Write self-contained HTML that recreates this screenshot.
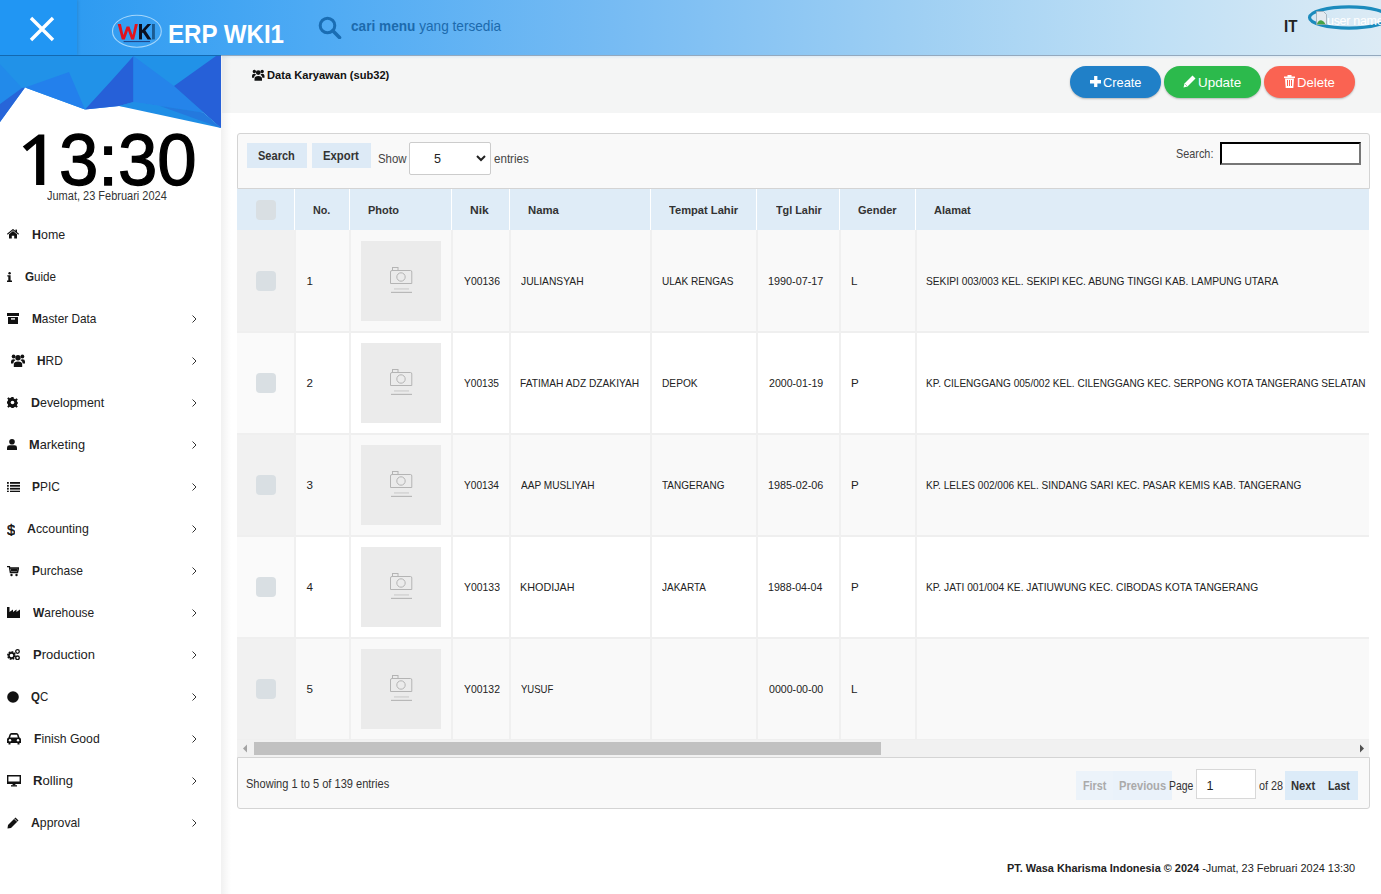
<!DOCTYPE html><html><head><meta charset="utf-8"><style>
*{box-sizing:border-box;margin:0;padding:0}
html,body{width:1381px;height:894px;overflow:hidden;background:#fff;font-family:"Liberation Sans",sans-serif;color:#222}
.a{position:absolute;white-space:nowrap}
.mi{position:absolute;left:0;width:221px;height:20px}
.mi svg{position:absolute}
.btn{position:absolute;top:66px;height:32px;border-radius:16px;box-shadow:0 1px 2px rgba(0,0,0,.25)}
.th{position:absolute;top:189px;height:41px;background:#dfecf7}
.photo{position:absolute;width:80px;height:80px;background:#ebebeb}
.cb{position:absolute;width:20px;height:20px;border-radius:4px;background:#d9dfe3}
</style></head><body>
<div class="a" style="left:0;top:0;width:1381px;height:55px;background:linear-gradient(90deg,#2e9bf1 78px,#4daaf4 310px,#76bbf3 610px,#9ecff3 910px,#bedff5 1150px,#dcebf5 1381px)"></div>
<div class="a" style="left:0;top:0;width:77px;height:55px;background:#2196f3;box-shadow:1px 0 3px rgba(0,0,0,.12)"></div>
<svg class="a" style="left:29px;top:16px" width="26" height="26" viewBox="0 0 26 26"><path d="M2 2L24 24M24 2L2 24" stroke="#fff" stroke-width="3.4"/></svg>
<svg class="a" style="left:105px;top:10px" width="65" height="42" viewBox="105 10 65 42">
<ellipse cx="136.9" cy="31.2" rx="24.4" ry="16" fill="none" stroke="#a4d6fb" stroke-width="1.1"/>
<polygon points="117.7,24 120.9,24 123.4,35 126.6,26.5 129.4,26.5 132.6,35 134.9,24 137.9,24 134.1,39.4 131.2,39.4 128,30.5 124.8,39.4 121.8,39.4" fill="#e3121c"/>
<rect x="139" y="24" width="3" height="15.4" fill="#0b1020"/>
<polygon points="141.5,30.8 147.6,24 151.2,24 145.4,30.4 151.4,39.4 147.6,39.4 142.9,32.4 141.5,33.8" fill="#0b1020"/>
<rect x="152" y="24" width="2.9" height="15.4" fill="#1b5b92"/>
<rect x="123.6" y="41" width="26.4" height="1.1" fill="#1a2a6a" opacity=".75"/>
</svg>
<div id="t_erp" class="a" style="left:167.50px;top:20.90px;font-size:26.00px;line-height:26.00px;color:#fff;font-weight:bold;transform:scaleX(0.9263);transform-origin:0 0;">ERP WKI1</div>
<svg class="a" style="left:318px;top:16px" width="24" height="23" viewBox="0 0 24 23"><circle cx="9.5" cy="9.5" r="7.3" fill="none" stroke="#1a6db3" stroke-width="3"/><path d="M14.8 14.8L21.5 21.5" stroke="#1a6db3" stroke-width="3.6" stroke-linecap="round"/></svg>
<div id="t_cari" class="a" style="left:351.00px;top:18.25px;font-size:15.00px;line-height:15.00px;color:#1c6aad;transform:scaleX(0.9086);transform-origin:0 0;"><b>cari menu</b> yang tersedia</div>
<div id="t_it" class="a" style="left:1284.10px;top:18.21px;font-size:17.40px;line-height:17.40px;color:#222;font-weight:bold;transform:scaleX(0.8667);transform-origin:0 0;">IT</div>
<svg class="a" style="left:1306px;top:3px" width="75" height="30" viewBox="0 0 75 30">
<ellipse cx="43" cy="14.5" rx="39.5" ry="10.6" fill="none" stroke="#1b8bbd" stroke-width="3.2"/>
<path d="M10.5 8.5H17.5L20.5 11.5V21.5H10.5Z" fill="#e4eaf0" stroke="#9aa8b4" stroke-width="0.8"/>
<path d="M10.8 21.3Q12.5 16.5 16 17.5Q18 18.2 19.5 21.3Z" fill="#46a346"/>
<text x="21" y="21.5" font-family="Liberation Sans" font-size="12.5" fill="#ffffff" letter-spacing="-0.3">user name</text>
</svg>
<svg class="a" style="left:0;top:55px" width="221" height="74" viewBox="0 55 221 74">
<polygon points="0,55 221,55 221,128 203,112.5 119,106 85,109.6 25,87.5 0,122" fill="#2192e8"/>
<polygon points="0,64 22,88 0,104" fill="#228aea"/>
<polygon points="0,104 22,88 25,87.5 0,122" fill="#2765d9"/>
<polygon points="25,87.5 69,72 85,109.6" fill="#2380ec"/>
<polygon points="85,109.6 112,80 133.5,56 133.5,102 119,106" fill="#2660d8"/>
<polygon points="133.5,56 174,86 203,112.5 133.5,102" fill="#2584ea"/>
<polygon points="216,56 221,56 221,128 174,86" fill="#2660d8"/>
<polygon points="119,106 133.5,102 203,112.5 221,128" fill="#1f8ee6"/>
<polygon points="160,106 203,112.5 221,128" fill="#2479de"/>
</svg>
<svg class="a" style="left:0;top:120px" width="60" height="70" viewBox="0 120 60 70"><polygon points="38.6,134.6 44.3,134.6 44.3,185.1 36.1,185.1 36.1,143.4 27,151.2 22.8,146.6" fill="#000"/></svg>
<div id="t_clock" class="a" style="left:58.70px;top:123.97px;font-size:72.50px;line-height:72.50px;color:#000;transform:scaleX(0.9758);transform-origin:0 0;-webkit-text-stroke:1.3px #000;">3:30</div>
<div id="t_date" class="a" style="left:47.00px;top:189.80px;font-size:12.00px;line-height:12.00px;color:#333;transform:scaleX(0.9160);transform-origin:0 0;">Jumat, 23 Februari 2024</div>
<div class="mi" style="top:225px"><svg style="left:7px;top:4px" width="12" height="10" viewBox="0 0 12 10"><path d="M0.3 5.2L6 0.6L11.7 5.2" fill="none" stroke="#111" stroke-width="1.1"/><rect x="8.4" y="0.6" width="1.6" height="2.6" fill="#111"/><path d="M2 5.2L6 2L10 5.2V9.6H7.2V6.8H4.8V9.6H2Z" fill="#111"/></svg></div>
<div id="t_m0" class="a" style="left:31.60px;top:229.16px;font-size:12.75px;line-height:12.75px;color:#222;transform:scaleX(0.9735);transform-origin:0 0;"><b>H</b>ome</div>
<div class="mi" style="top:267px"><svg style="left:7px;top:5px" width="5" height="10" viewBox="0 0 5 10"><circle cx="2.6" cy="1.2" r="1.2" fill="#111"/><path d="M0.3 3.2H3.6V8.5H5V10H0V8.5H1.3V4.6H0.3Z" fill="#111"/></svg></div>
<div id="t_m1" class="a" style="left:24.90px;top:271.16px;font-size:12.75px;line-height:12.75px;color:#222;transform:scaleX(0.9131);transform-origin:0 0;"><b>G</b>uide</div>
<div class="mi" style="top:309px"><svg style="left:7px;top:4px" width="12" height="11" viewBox="0 0 12 11"><rect x="0" y="0" width="12" height="3" fill="#111"/><rect x="1" y="4" width="10" height="7" fill="#111"/><rect x="4" y="5.2" width="4" height="1.4" fill="#fff"/></svg><svg style="left:191px;top:5px" width="7" height="10" viewBox="0 0 7 10"><path d="M1.5 1.5L5 5L1.5 8.5" fill="none" stroke="#333" stroke-width="1"/></svg></div>
<div id="t_m2" class="a" style="left:31.80px;top:313.16px;font-size:12.75px;line-height:12.75px;color:#222;transform:scaleX(0.9276);transform-origin:0 0;"><b>M</b>aster Data</div>
<div class="mi" style="top:351px"><svg style="left:11px;top:3px" width="14" height="13" viewBox="0 0 14 13"><circle cx="7" cy="3.8" r="2.7" fill="#111"/><circle cx="2.6" cy="2.5" r="1.9" fill="#111"/><circle cx="11.4" cy="2.5" r="1.9" fill="#111"/><path d="M2.8 13V10.8Q2.8 7.6 7 7.6Q11.2 7.6 11.2 10.8V13Z" fill="#111"/><path d="M0 9.6V7.4Q0 5.2 2.5 5.2Q3.9 5.2 4.5 6.1Q2.3 7.3 2.3 9.6Z" fill="#111"/><path d="M14 9.6V7.4Q14 5.2 11.5 5.2Q10.1 5.2 9.5 6.1Q11.7 7.3 11.7 9.6Z" fill="#111"/></svg><svg style="left:191px;top:5px" width="7" height="10" viewBox="0 0 7 10"><path d="M1.5 1.5L5 5L1.5 8.5" fill="none" stroke="#333" stroke-width="1"/></svg></div>
<div id="t_m3" class="a" style="left:36.60px;top:355.16px;font-size:12.75px;line-height:12.75px;color:#222;transform:scaleX(0.9313);transform-origin:0 0;"><b>H</b>RD</div>
<div class="mi" style="top:393px"><svg style="left:7px;top:4px" width="11" height="11" viewBox="0 0 11 11"><path d="M4.5 0H6.5L6.8 1.6L8.2 2.2L9.5 1.2L10.8 2.5L9.8 3.8L10.4 5.2L11 5.5V6.5L10.4 6.8L9.8 8.2L10.8 9.5L9.5 10.8L8.2 9.8L6.8 10.4L6.5 11H4.5L4.2 10.4L2.8 9.8L1.5 10.8L0.2 9.5L1.2 8.2L0.6 6.8L0 6.5V4.5L0.6 4.2L1.2 2.8L0.2 1.5L1.5 0.2L2.8 1.2L4.2 0.6Z" fill="#111"/><circle cx="5.5" cy="5.5" r="1.8" fill="#fff"/></svg><svg style="left:191px;top:5px" width="7" height="10" viewBox="0 0 7 10"><path d="M1.5 1.5L5 5L1.5 8.5" fill="none" stroke="#333" stroke-width="1"/></svg></div>
<div id="t_m4" class="a" style="left:30.50px;top:397.16px;font-size:12.75px;line-height:12.75px;color:#222;transform:scaleX(0.9734);transform-origin:0 0;"><b>D</b>evelopment</div>
<div class="mi" style="top:435px"><svg style="left:7px;top:4px" width="10" height="11" viewBox="0 0 10 11"><circle cx="5" cy="2.8" r="2.8" fill="#111"/><path d="M0 11V8.5Q0 6.2 2.5 6.2H7.5Q10 6.2 10 8.5V11Z" fill="#111"/></svg><svg style="left:191px;top:5px" width="7" height="10" viewBox="0 0 7 10"><path d="M1.5 1.5L5 5L1.5 8.5" fill="none" stroke="#333" stroke-width="1"/></svg></div>
<div id="t_m5" class="a" style="left:29.10px;top:439.16px;font-size:12.75px;line-height:12.75px;color:#222;transform:scaleX(1.0012);transform-origin:0 0;"><b>M</b>arketing</div>
<div class="mi" style="top:477px"><svg style="left:7px;top:4.5px" width="13" height="10.5" viewBox="0 0 13 10.5"><g fill="#111"><rect x="0" y="0" width="1.8" height="1.8"/><rect x="3" y="0" width="10" height="1.8"/><rect x="0" y="2.9" width="1.8" height="1.8"/><rect x="3" y="2.9" width="10" height="1.8"/><rect x="0" y="5.8" width="1.8" height="1.8"/><rect x="3" y="5.8" width="10" height="1.8"/><rect x="0" y="8.7" width="1.8" height="1.8"/><rect x="3" y="8.7" width="10" height="1.8"/></g></svg><svg style="left:191px;top:5px" width="7" height="10" viewBox="0 0 7 10"><path d="M1.5 1.5L5 5L1.5 8.5" fill="none" stroke="#333" stroke-width="1"/></svg></div>
<div id="t_m6" class="a" style="left:32.10px;top:481.16px;font-size:12.75px;line-height:12.75px;color:#222;transform:scaleX(0.9331);transform-origin:0 0;"><b>P</b>PIC</div>
<div class="mi" style="top:519px"><svg style="left:7px;top:3px" width="8" height="14" viewBox="0 0 8 14"><text x="0" y="12.5" font-family="Liberation Sans" font-size="15" fill="#111" stroke="#111" stroke-width="0.4">$</text></svg><svg style="left:191px;top:5px" width="7" height="10" viewBox="0 0 7 10"><path d="M1.5 1.5L5 5L1.5 8.5" fill="none" stroke="#333" stroke-width="1"/></svg></div>
<div id="t_m7" class="a" style="left:27.00px;top:523.16px;font-size:12.75px;line-height:12.75px;color:#222;transform:scaleX(0.9683);transform-origin:0 0;"><b>A</b>ccounting</div>
<div class="mi" style="top:561px"><svg style="left:7px;top:5px" width="12" height="11" viewBox="0 0 12 11"><path d="M0 0.5H2.4L3.4 6.5H10.5L11.5 2H3" fill="none" stroke="#111" stroke-width="1.4"/><rect x="4" y="2.5" width="6.5" height="3" fill="#111"/><circle cx="4.5" cy="9" r="1.2" fill="#111"/><circle cx="9.5" cy="9" r="1.2" fill="#111"/></svg><svg style="left:191px;top:5px" width="7" height="10" viewBox="0 0 7 10"><path d="M1.5 1.5L5 5L1.5 8.5" fill="none" stroke="#333" stroke-width="1"/></svg></div>
<div id="t_m8" class="a" style="left:31.60px;top:565.16px;font-size:12.75px;line-height:12.75px;color:#222;transform:scaleX(0.9446);transform-origin:0 0;"><b>P</b>urchase</div>
<div class="mi" style="top:603px"><svg style="left:7px;top:4px" width="13" height="11" viewBox="0 0 13 11"><path d="M0 0H2.5V5L6 2.5V5L9.5 2.5V5L13 2.5V11H0Z" fill="#111"/></svg><svg style="left:191px;top:5px" width="7" height="10" viewBox="0 0 7 10"><path d="M1.5 1.5L5 5L1.5 8.5" fill="none" stroke="#333" stroke-width="1"/></svg></div>
<div id="t_m9" class="a" style="left:32.50px;top:607.16px;font-size:12.75px;line-height:12.75px;color:#222;transform:scaleX(0.9378);transform-origin:0 0;"><b>W</b>arehouse</div>
<div class="mi" style="top:645px"><svg style="left:7px;top:4px" width="13" height="11" viewBox="0 0 13 11"><circle cx="4.5" cy="6.5" r="3.4" fill="none" stroke="#111" stroke-width="2.2" stroke-dasharray="1.6 1"/><circle cx="4.5" cy="6.5" r="2.6" fill="none" stroke="#111" stroke-width="1.6"/><circle cx="10.5" cy="2.5" r="1.8" fill="none" stroke="#111" stroke-width="1.3"/><circle cx="10.5" cy="8.8" r="1.8" fill="none" stroke="#111" stroke-width="1.3"/></svg><svg style="left:191px;top:5px" width="7" height="10" viewBox="0 0 7 10"><path d="M1.5 1.5L5 5L1.5 8.5" fill="none" stroke="#333" stroke-width="1"/></svg></div>
<div id="t_m10" class="a" style="left:33.10px;top:649.16px;font-size:12.75px;line-height:12.75px;color:#222;transform:scaleX(1.0169);transform-origin:0 0;"><b>P</b>roduction</div>
<div class="mi" style="top:687px"><svg style="left:7px;top:4px" width="12" height="12" viewBox="0 0 12 12"><circle cx="6" cy="6" r="5.8" fill="#111"/></svg><svg style="left:191px;top:5px" width="7" height="10" viewBox="0 0 7 10"><path d="M1.5 1.5L5 5L1.5 8.5" fill="none" stroke="#333" stroke-width="1"/></svg></div>
<div id="t_m11" class="a" style="left:30.60px;top:691.16px;font-size:12.75px;line-height:12.75px;color:#222;transform:scaleX(0.9006);transform-origin:0 0;"><b>Q</b>C</div>
<div class="mi" style="top:729px"><svg style="left:7px;top:4px" width="14" height="12" viewBox="0 0 14 12"><path d="M2.5 1.5Q3 0 4.5 0H9.5Q11 0 11.5 1.5L12.5 4.5Q14 5 14 6.5V10H12.5V11.5H10.5V10H3.5V11.5H1.5V10H0V6.5Q0 5 1.5 4.5Z" fill="#111"/><path d="M3.2 4.5L4 1.8H10L10.8 4.5Z" fill="#fff"/><circle cx="3" cy="7.2" r="1.2" fill="#fff"/><circle cx="11" cy="7.2" r="1.2" fill="#fff"/></svg><svg style="left:191px;top:5px" width="7" height="10" viewBox="0 0 7 10"><path d="M1.5 1.5L5 5L1.5 8.5" fill="none" stroke="#333" stroke-width="1"/></svg></div>
<div id="t_m12" class="a" style="left:34.10px;top:733.16px;font-size:12.75px;line-height:12.75px;color:#222;transform:scaleX(0.9552);transform-origin:0 0;"><b>F</b>inish Good</div>
<div class="mi" style="top:771px"><svg style="left:7px;top:4px" width="14" height="11.5" viewBox="0 0 14 11.5"><path d="M0 0H14V9H0ZM1.4 1.4V6.6H12.6V1.4Z" fill="#111" fill-rule="evenodd"/><rect x="5.6" y="9" width="2.8" height="1.4" fill="#111"/><rect x="4" y="10.2" width="6" height="1.3" fill="#111"/></svg><svg style="left:191px;top:5px" width="7" height="10" viewBox="0 0 7 10"><path d="M1.5 1.5L5 5L1.5 8.5" fill="none" stroke="#333" stroke-width="1"/></svg></div>
<div id="t_m13" class="a" style="left:33.10px;top:775.16px;font-size:12.75px;line-height:12.75px;color:#222;transform:scaleX(1.0270);transform-origin:0 0;"><b>R</b>olling</div>
<div class="mi" style="top:813px"><svg style="left:7px;top:4px" width="12" height="12" viewBox="0 0 12 12"><path d="M8.5 0.5L11.5 3.5L4 11L0.5 11.5L1 8Z" fill="#111"/><path d="M7.3 1.7L10.3 4.7" stroke="#fff" stroke-width="0.8"/></svg><svg style="left:191px;top:5px" width="7" height="10" viewBox="0 0 7 10"><path d="M1.5 1.5L5 5L1.5 8.5" fill="none" stroke="#333" stroke-width="1"/></svg></div>
<div id="t_m14" class="a" style="left:30.60px;top:817.16px;font-size:12.75px;line-height:12.75px;color:#222;transform:scaleX(0.9614);transform-origin:0 0;"><b>A</b>pproval</div>
<div class="a" style="left:222px;top:56px;width:1159px;height:57px;background:#f4f5f5"></div>
<svg class="a" style="left:252px;top:68.5px" width="12.5" height="12" viewBox="0 0 14 13"><circle cx="7" cy="3.8" r="2.7" fill="#111"/><circle cx="2.6" cy="2.5" r="1.9" fill="#111"/><circle cx="11.4" cy="2.5" r="1.9" fill="#111"/><path d="M2.8 13V10.8Q2.8 7.6 7 7.6Q11.2 7.6 11.2 10.8V13Z" fill="#111"/><path d="M0 9.6V7.4Q0 5.2 2.5 5.2Q3.9 5.2 4.5 6.1Q2.3 7.3 2.3 9.6Z" fill="#111"/><path d="M14 9.6V7.4Q14 5.2 11.5 5.2Q10.1 5.2 9.5 6.1Q11.7 7.3 11.7 9.6Z" fill="#111"/></svg>
<div id="t_title" class="a" style="left:267.10px;top:70.19px;font-size:11.30px;line-height:11.30px;color:#111;font-weight:bold;transform:scaleX(0.9840);transform-origin:0 0;">Data Karyawan (sub32)</div>
<div class="btn" style="left:1070px;width:91px;background:#2080c8"></div>
<div class="btn" style="left:1164px;width:97px;background:#2cba4c"></div>
<div class="btn" style="left:1264px;width:91px;background:#fa6352"></div>
<svg class="a" style="left:1089.5px;top:75.7px" width="11.5" height="11.5" viewBox="0 0 12 12"><path d="M4.3 0H7.7V4.3H12V7.7H7.7V12H4.3V7.7H0V4.3H4.3Z" fill="#fff"/></svg>
<svg class="a" style="left:1183px;top:75px" width="13" height="13" viewBox="0 0 13 13"><path d="M9.5 0.5L12.5 3.5L4.5 11.5L0.5 12.5L1.5 8.5Z" fill="#fff"/><path d="M2.5 9.5L3.5 10.5" stroke="#2cba4c" stroke-width="1"/></svg>
<svg class="a" style="left:1284px;top:75px" width="11" height="13" viewBox="0 0 11 13"><rect x="0" y="1.5" width="11" height="1.6" fill="#fff"/><rect x="3.5" y="0" width="4" height="2" fill="#fff"/><path d="M1 3.5H10L9.3 13H1.7Z" fill="#fff"/><rect x="3" y="5" width="1" height="6" fill="#fa6352"/><rect x="5" y="5" width="1" height="6" fill="#fa6352"/><rect x="7" y="5" width="1" height="6" fill="#fa6352"/></svg>
<div id="t_create" class="a" style="left:1103.00px;top:75.81px;font-size:13.40px;line-height:13.40px;color:#fff;transform:scaleX(0.9565);transform-origin:0 0;">Create</div>
<div id="t_update" class="a" style="left:1198.30px;top:75.81px;font-size:13.40px;line-height:13.40px;color:#fff;transform:scaleX(1.0022);transform-origin:0 0;">Update</div>
<div id="t_delete" class="a" style="left:1297.00px;top:75.81px;font-size:13.40px;line-height:13.40px;color:#fff;transform:scaleX(0.9781);transform-origin:0 0;">Delete</div>
<div class="a" style="left:237px;top:133px;width:1133px;height:56px;border:1px solid #d4d4d4;border-radius:3px 3px 0 0;background:#f9f9f9"></div>
<div class="a" style="left:237px;top:757px;width:1133px;height:52px;border:1px solid #d4d4d4;border-radius:0 0 3px 3px;background:#f9f9f9"></div>
<div class="a" style="left:247px;top:143px;width:60px;height:25px;background:#ddeaf6"></div>
<div class="a" style="left:312px;top:143px;width:59px;height:25px;background:#ddeaf6"></div>
<div id="t_bsearch" class="a" style="left:258.10px;top:150.49px;font-size:12.60px;line-height:12.60px;color:#333;font-weight:bold;transform:scaleX(0.8773);transform-origin:0 0;">Search</div>
<div id="t_bexport" class="a" style="left:323.10px;top:150.49px;font-size:12.60px;line-height:12.60px;color:#333;font-weight:bold;transform:scaleX(0.8992);transform-origin:0 0;">Export</div>
<div id="t_show" class="a" style="left:378.10px;top:152.69px;font-size:12.60px;line-height:12.60px;color:#444;transform:scaleX(0.9058);transform-origin:0 0;">Show</div>
<div class="a" style="left:409px;top:142px;width:82px;height:33px;background:#fff;border:1px solid #ccc;border-radius:2px"></div>
<div id="t_sel5" class="a" style="left:434.00px;top:152.69px;font-size:12.60px;line-height:12.60px;color:#222;">5</div>
<svg class="a" style="left:476px;top:155px" width="10" height="7" viewBox="0 0 10 7"><path d="M1 1L5 5L9 1" fill="none" stroke="#222" stroke-width="2"/></svg>
<div id="t_entries" class="a" style="left:493.70px;top:152.69px;font-size:12.60px;line-height:12.60px;color:#444;transform:scaleX(0.9209);transform-origin:0 0;">entries</div>
<div id="t_searchlbl" class="a" style="left:1176.10px;top:148.39px;font-size:12.60px;line-height:12.60px;color:#444;transform:scaleX(0.8618);transform-origin:0 0;">Search:</div>
<div class="a" style="left:1220px;top:142px;width:141px;height:23px;background:#fff;border:2px inset #767676;border-top-color:#222;border-left-color:#222"></div>
<div class="th" style="left:237px;width:57px"></div>
<div class="th" style="left:295px;width:54px"></div>
<div class="th" style="left:350px;width:101px"></div>
<div class="th" style="left:452px;width:57px"></div>
<div class="th" style="left:510px;width:140px"></div>
<div class="th" style="left:651px;width:105px"></div>
<div class="th" style="left:757px;width:82px"></div>
<div class="th" style="left:840px;width:75px"></div>
<div class="th" style="left:916px;width:453px"></div>
<div id="t_h1" class="a" style="left:313.00px;top:205.40px;font-size:11.30px;line-height:11.30px;color:#333;font-weight:bold;transform:scaleX(0.9538);transform-origin:0 0;">No.</div>
<div id="t_h2" class="a" style="left:368.00px;top:205.40px;font-size:11.30px;line-height:11.30px;color:#333;font-weight:bold;transform:scaleX(0.9711);transform-origin:0 0;">Photo</div>
<div id="t_h3" class="a" style="left:469.70px;top:205.40px;font-size:11.30px;line-height:11.30px;color:#333;font-weight:bold;transform:scaleX(1.0713);transform-origin:0 0;">Nik</div>
<div id="t_h4" class="a" style="left:527.60px;top:205.40px;font-size:11.30px;line-height:11.30px;color:#333;font-weight:bold;transform:scaleX(1.0025);transform-origin:0 0;">Nama</div>
<div id="t_h5" class="a" style="left:669.40px;top:205.40px;font-size:11.30px;line-height:11.30px;color:#333;font-weight:bold;transform:scaleX(0.9857);transform-origin:0 0;">Tempat Lahir</div>
<div id="t_h6" class="a" style="left:775.50px;top:205.40px;font-size:11.30px;line-height:11.30px;color:#333;font-weight:bold;transform:scaleX(0.9590);transform-origin:0 0;">Tgl Lahir</div>
<div id="t_h7" class="a" style="left:858.00px;top:205.40px;font-size:11.30px;line-height:11.30px;color:#333;font-weight:bold;transform:scaleX(0.9771);transform-origin:0 0;">Gender</div>
<div id="t_h8" class="a" style="left:933.80px;top:205.40px;font-size:11.30px;line-height:11.30px;color:#333;font-weight:bold;transform:scaleX(0.9754);transform-origin:0 0;">Alamat</div>
<div class="cb" style="left:256px;top:200px"></div>
<div class="a" style="left:237px;top:230px;width:1132px;height:102px;background:#f9f9f9"></div>
<div class="a" style="left:237px;top:230px;width:58px;height:102px;background:#f1f1f1"></div>
<div class="cb" style="left:256px;top:271px"></div>
<div class="photo" style="left:361px;top:241px"><svg class="a" style="left:0;top:0" width="80" height="80" viewBox="0 0 80 80"><path d="M29.5 42.5V31Q29.5 29.5 31 29.5H49.5Q50.8 29.5 50.8 31V42.5Z" fill="none" stroke="#b4b4b4" stroke-width="1"/><rect x="31.5" y="26.5" width="5.5" height="3" fill="none" stroke="#b4b4b4" stroke-width="1"/><circle cx="40" cy="36" r="4.2" fill="none" stroke="#b4b4b4" stroke-width="1"/><rect x="33" y="47.5" width="15" height="0.9" fill="#c4c4c4"/><rect x="30" y="50.8" width="21" height="1.2" fill="#b8b8b8"/></svg></div>
<div class="a" style="left:306.6px;top:274.94px;font-size:11.6px;line-height:11.6px;color:#222">1</div>
<div id="t_c0_3" class="a" style="left:463.60px;top:274.94px;font-size:11.60px;line-height:11.60px;color:#222;transform:scaleX(0.8988);transform-origin:0 0;">Y00136</div>
<div id="t_c0_4" class="a" style="left:521.10px;top:274.94px;font-size:11.60px;line-height:11.60px;color:#222;transform:scaleX(0.8851);transform-origin:0 0;">JULIANSYAH</div>
<div id="t_c0_5" class="a" style="left:661.50px;top:274.94px;font-size:11.60px;line-height:11.60px;color:#222;transform:scaleX(0.8671);transform-origin:0 0;">ULAK RENGAS</div>
<div id="t_c0_6" class="a" style="left:768.40px;top:274.94px;font-size:11.60px;line-height:11.60px;color:#222;transform:scaleX(0.9319);transform-origin:0 0;">1990-07-17</div>
<div id="t_c0_7" class="a" style="left:850.90px;top:274.94px;font-size:11.60px;line-height:11.60px;color:#222;">L</div>
<div id="t_c0_8" class="a" style="left:925.80px;top:274.94px;font-size:11.60px;line-height:11.60px;color:#222;transform:scaleX(0.8800);transform-origin:0 0;">SEKIPI 003/003 KEL. SEKIPI KEC. ABUNG TINGGI KAB. LAMPUNG UTARA</div>
<div class="a" style="left:237px;top:332px;width:1132px;height:102px;background:#ffffff"></div>
<div class="a" style="left:237px;top:332px;width:58px;height:102px;background:#fafafa"></div>
<div class="cb" style="left:256px;top:373px"></div>
<div class="photo" style="left:361px;top:343px"><svg class="a" style="left:0;top:0" width="80" height="80" viewBox="0 0 80 80"><path d="M29.5 42.5V31Q29.5 29.5 31 29.5H49.5Q50.8 29.5 50.8 31V42.5Z" fill="none" stroke="#b4b4b4" stroke-width="1"/><rect x="31.5" y="26.5" width="5.5" height="3" fill="none" stroke="#b4b4b4" stroke-width="1"/><circle cx="40" cy="36" r="4.2" fill="none" stroke="#b4b4b4" stroke-width="1"/><rect x="33" y="47.5" width="15" height="0.9" fill="#c4c4c4"/><rect x="30" y="50.8" width="21" height="1.2" fill="#b8b8b8"/></svg></div>
<div class="a" style="left:306.6px;top:376.94px;font-size:11.6px;line-height:11.6px;color:#222">2</div>
<div id="t_c1_3" class="a" style="left:463.60px;top:376.94px;font-size:11.60px;line-height:11.60px;color:#222;transform:scaleX(0.8739);transform-origin:0 0;">Y00135</div>
<div id="t_c1_4" class="a" style="left:520.20px;top:376.94px;font-size:11.60px;line-height:11.60px;color:#222;transform:scaleX(0.8800);transform-origin:0 0;">FATIMAH ADZ DZAKIYAH</div>
<div id="t_c1_5" class="a" style="left:661.50px;top:376.94px;font-size:11.60px;line-height:11.60px;color:#222;transform:scaleX(0.8780);transform-origin:0 0;">DEPOK</div>
<div id="t_c1_6" class="a" style="left:769.30px;top:376.94px;font-size:11.60px;line-height:11.60px;color:#222;transform:scaleX(0.9142);transform-origin:0 0;">2000-01-19</div>
<div id="t_c1_7" class="a" style="left:850.90px;top:376.94px;font-size:11.60px;line-height:11.60px;color:#222;">P</div>
<div id="t_c1_8" class="a" style="left:925.80px;top:376.94px;font-size:11.60px;line-height:11.60px;color:#222;transform:scaleX(0.8681);transform-origin:0 0;">KP. CILENGGANG 005/002 KEL. CILENGGANG KEC. SERPONG KOTA TANGERANG SELATAN</div>
<div class="a" style="left:237px;top:434px;width:1132px;height:102px;background:#f9f9f9"></div>
<div class="a" style="left:237px;top:434px;width:58px;height:102px;background:#f1f1f1"></div>
<div class="cb" style="left:256px;top:475px"></div>
<div class="photo" style="left:361px;top:445px"><svg class="a" style="left:0;top:0" width="80" height="80" viewBox="0 0 80 80"><path d="M29.5 42.5V31Q29.5 29.5 31 29.5H49.5Q50.8 29.5 50.8 31V42.5Z" fill="none" stroke="#b4b4b4" stroke-width="1"/><rect x="31.5" y="26.5" width="5.5" height="3" fill="none" stroke="#b4b4b4" stroke-width="1"/><circle cx="40" cy="36" r="4.2" fill="none" stroke="#b4b4b4" stroke-width="1"/><rect x="33" y="47.5" width="15" height="0.9" fill="#c4c4c4"/><rect x="30" y="50.8" width="21" height="1.2" fill="#b8b8b8"/></svg></div>
<div class="a" style="left:306.6px;top:478.94px;font-size:11.6px;line-height:11.6px;color:#222">3</div>
<div id="t_c2_3" class="a" style="left:463.60px;top:478.94px;font-size:11.60px;line-height:11.60px;color:#222;transform:scaleX(0.8741);transform-origin:0 0;">Y00134</div>
<div id="t_c2_4" class="a" style="left:521.10px;top:478.94px;font-size:11.60px;line-height:11.60px;color:#222;transform:scaleX(0.8696);transform-origin:0 0;">AAP MUSLIYAH</div>
<div id="t_c2_5" class="a" style="left:662.40px;top:478.94px;font-size:11.60px;line-height:11.60px;color:#222;transform:scaleX(0.8606);transform-origin:0 0;">TANGERANG</div>
<div id="t_c2_6" class="a" style="left:768.40px;top:478.94px;font-size:11.60px;line-height:11.60px;color:#222;transform:scaleX(0.9320);transform-origin:0 0;">1985-02-06</div>
<div id="t_c2_7" class="a" style="left:850.90px;top:478.94px;font-size:11.60px;line-height:11.60px;color:#222;">P</div>
<div id="t_c2_8" class="a" style="left:925.80px;top:478.94px;font-size:11.60px;line-height:11.60px;color:#222;transform:scaleX(0.8672);transform-origin:0 0;">KP. LELES 002/006 KEL. SINDANG SARI KEC. PASAR KEMIS KAB. TANGERANG</div>
<div class="a" style="left:237px;top:536px;width:1132px;height:102px;background:#ffffff"></div>
<div class="a" style="left:237px;top:536px;width:58px;height:102px;background:#fafafa"></div>
<div class="cb" style="left:256px;top:577px"></div>
<div class="photo" style="left:361px;top:547px"><svg class="a" style="left:0;top:0" width="80" height="80" viewBox="0 0 80 80"><path d="M29.5 42.5V31Q29.5 29.5 31 29.5H49.5Q50.8 29.5 50.8 31V42.5Z" fill="none" stroke="#b4b4b4" stroke-width="1"/><rect x="31.5" y="26.5" width="5.5" height="3" fill="none" stroke="#b4b4b4" stroke-width="1"/><circle cx="40" cy="36" r="4.2" fill="none" stroke="#b4b4b4" stroke-width="1"/><rect x="33" y="47.5" width="15" height="0.9" fill="#c4c4c4"/><rect x="30" y="50.8" width="21" height="1.2" fill="#b8b8b8"/></svg></div>
<div class="a" style="left:306.6px;top:580.94px;font-size:11.6px;line-height:11.6px;color:#222">4</div>
<div id="t_c3_3" class="a" style="left:463.60px;top:580.94px;font-size:11.60px;line-height:11.60px;color:#222;transform:scaleX(0.8988);transform-origin:0 0;">Y00133</div>
<div id="t_c3_4" class="a" style="left:520.20px;top:580.94px;font-size:11.60px;line-height:11.60px;color:#222;transform:scaleX(0.9311);transform-origin:0 0;">KHODIJAH</div>
<div id="t_c3_5" class="a" style="left:662.40px;top:580.94px;font-size:11.60px;line-height:11.60px;color:#222;transform:scaleX(0.8611);transform-origin:0 0;">JAKARTA</div>
<div id="t_c3_6" class="a" style="left:768.40px;top:580.94px;font-size:11.60px;line-height:11.60px;color:#222;transform:scaleX(0.9162);transform-origin:0 0;">1988-04-04</div>
<div id="t_c3_7" class="a" style="left:850.90px;top:580.94px;font-size:11.60px;line-height:11.60px;color:#222;">P</div>
<div id="t_c3_8" class="a" style="left:925.80px;top:580.94px;font-size:11.60px;line-height:11.60px;color:#222;transform:scaleX(0.8829);transform-origin:0 0;">KP. JATI 001/004 KE. JATIUWUNG KEC. CIBODAS KOTA TANGERANG</div>
<div class="a" style="left:237px;top:638px;width:1132px;height:102px;background:#f9f9f9"></div>
<div class="a" style="left:237px;top:638px;width:58px;height:102px;background:#f1f1f1"></div>
<div class="cb" style="left:256px;top:679px"></div>
<div class="photo" style="left:361px;top:649px"><svg class="a" style="left:0;top:0" width="80" height="80" viewBox="0 0 80 80"><path d="M29.5 42.5V31Q29.5 29.5 31 29.5H49.5Q50.8 29.5 50.8 31V42.5Z" fill="none" stroke="#b4b4b4" stroke-width="1"/><rect x="31.5" y="26.5" width="5.5" height="3" fill="none" stroke="#b4b4b4" stroke-width="1"/><circle cx="40" cy="36" r="4.2" fill="none" stroke="#b4b4b4" stroke-width="1"/><rect x="33" y="47.5" width="15" height="0.9" fill="#c4c4c4"/><rect x="30" y="50.8" width="21" height="1.2" fill="#b8b8b8"/></svg></div>
<div class="a" style="left:306.6px;top:682.94px;font-size:11.6px;line-height:11.6px;color:#222">5</div>
<div id="t_c4_3" class="a" style="left:463.60px;top:682.94px;font-size:11.60px;line-height:11.60px;color:#222;transform:scaleX(0.8987);transform-origin:0 0;">Y00132</div>
<div id="t_c4_4" class="a" style="left:521.10px;top:682.94px;font-size:11.60px;line-height:11.60px;color:#222;transform:scaleX(0.8222);transform-origin:0 0;">YUSUF</div>
<div id="t_c4_6" class="a" style="left:769.30px;top:682.94px;font-size:11.60px;line-height:11.60px;color:#222;transform:scaleX(0.9148);transform-origin:0 0;">0000-00-00</div>
<div id="t_c4_7" class="a" style="left:850.90px;top:682.94px;font-size:11.60px;line-height:11.60px;color:#222;">L</div>
<div class="a" style="left:294px;top:230px;width:2px;height:102px;background:#f0f0f0"></div>
<div class="a" style="left:349px;top:230px;width:2px;height:102px;background:#f0f0f0"></div>
<div class="a" style="left:451px;top:230px;width:2px;height:102px;background:#f0f0f0"></div>
<div class="a" style="left:509px;top:230px;width:2px;height:102px;background:#f0f0f0"></div>
<div class="a" style="left:650px;top:230px;width:2px;height:102px;background:#f0f0f0"></div>
<div class="a" style="left:756px;top:230px;width:2px;height:102px;background:#f0f0f0"></div>
<div class="a" style="left:839px;top:230px;width:2px;height:102px;background:#f0f0f0"></div>
<div class="a" style="left:915px;top:230px;width:2px;height:102px;background:#f0f0f0"></div>
<div class="a" style="left:237px;top:331px;width:1132px;height:2px;background:#efefef"></div>
<div class="a" style="left:294px;top:332px;width:2px;height:102px;background:#f0f0f0"></div>
<div class="a" style="left:349px;top:332px;width:2px;height:102px;background:#f0f0f0"></div>
<div class="a" style="left:451px;top:332px;width:2px;height:102px;background:#f0f0f0"></div>
<div class="a" style="left:509px;top:332px;width:2px;height:102px;background:#f0f0f0"></div>
<div class="a" style="left:650px;top:332px;width:2px;height:102px;background:#f0f0f0"></div>
<div class="a" style="left:756px;top:332px;width:2px;height:102px;background:#f0f0f0"></div>
<div class="a" style="left:839px;top:332px;width:2px;height:102px;background:#f0f0f0"></div>
<div class="a" style="left:915px;top:332px;width:2px;height:102px;background:#f0f0f0"></div>
<div class="a" style="left:237px;top:433px;width:1132px;height:2px;background:#efefef"></div>
<div class="a" style="left:294px;top:434px;width:2px;height:102px;background:#f0f0f0"></div>
<div class="a" style="left:349px;top:434px;width:2px;height:102px;background:#f0f0f0"></div>
<div class="a" style="left:451px;top:434px;width:2px;height:102px;background:#f0f0f0"></div>
<div class="a" style="left:509px;top:434px;width:2px;height:102px;background:#f0f0f0"></div>
<div class="a" style="left:650px;top:434px;width:2px;height:102px;background:#f0f0f0"></div>
<div class="a" style="left:756px;top:434px;width:2px;height:102px;background:#f0f0f0"></div>
<div class="a" style="left:839px;top:434px;width:2px;height:102px;background:#f0f0f0"></div>
<div class="a" style="left:915px;top:434px;width:2px;height:102px;background:#f0f0f0"></div>
<div class="a" style="left:237px;top:535px;width:1132px;height:2px;background:#efefef"></div>
<div class="a" style="left:294px;top:536px;width:2px;height:102px;background:#f0f0f0"></div>
<div class="a" style="left:349px;top:536px;width:2px;height:102px;background:#f0f0f0"></div>
<div class="a" style="left:451px;top:536px;width:2px;height:102px;background:#f0f0f0"></div>
<div class="a" style="left:509px;top:536px;width:2px;height:102px;background:#f0f0f0"></div>
<div class="a" style="left:650px;top:536px;width:2px;height:102px;background:#f0f0f0"></div>
<div class="a" style="left:756px;top:536px;width:2px;height:102px;background:#f0f0f0"></div>
<div class="a" style="left:839px;top:536px;width:2px;height:102px;background:#f0f0f0"></div>
<div class="a" style="left:915px;top:536px;width:2px;height:102px;background:#f0f0f0"></div>
<div class="a" style="left:237px;top:637px;width:1132px;height:2px;background:#efefef"></div>
<div class="a" style="left:294px;top:638px;width:2px;height:102px;background:#f0f0f0"></div>
<div class="a" style="left:349px;top:638px;width:2px;height:102px;background:#f0f0f0"></div>
<div class="a" style="left:451px;top:638px;width:2px;height:102px;background:#f0f0f0"></div>
<div class="a" style="left:509px;top:638px;width:2px;height:102px;background:#f0f0f0"></div>
<div class="a" style="left:650px;top:638px;width:2px;height:102px;background:#f0f0f0"></div>
<div class="a" style="left:756px;top:638px;width:2px;height:102px;background:#f0f0f0"></div>
<div class="a" style="left:839px;top:638px;width:2px;height:102px;background:#f0f0f0"></div>
<div class="a" style="left:915px;top:638px;width:2px;height:102px;background:#f0f0f0"></div>
<div class="a" style="left:237px;top:739px;width:1132px;height:2px;background:#efefef"></div>
<div class="a" style="left:237px;top:740px;width:1132px;height:17px;background:#f1f1f1"></div>
<div class="a" style="left:254px;top:742px;width:627px;height:13px;background:#c1c1c1"></div>
<svg class="a" style="left:242px;top:744px" width="6" height="9" viewBox="0 0 6 9"><path d="M5 0.5V8.5L1 4.5Z" fill="#a3a3a3"/></svg>
<svg class="a" style="left:1359px;top:744px" width="6" height="9" viewBox="0 0 6 9"><path d="M1 0.5V8.5L5 4.5Z" fill="#505050"/></svg>
<div id="t_showing" class="a" style="left:245.50px;top:778.09px;font-size:12.60px;line-height:12.60px;color:#333;transform:scaleX(0.8777);transform-origin:0 0;">Showing 1 to 5 of 139 entries</div>
<div class="a" style="left:1076px;top:771px;width:37px;height:29px;background:#ecf3fa"></div>
<div class="a" style="left:1113px;top:771px;width:59px;height:29px;background:#eaf2fa"></div>
<div id="t_first" class="a" style="left:1082.70px;top:779.59px;font-size:12.60px;line-height:12.60px;color:#aaa;font-weight:bold;transform:scaleX(0.8578);transform-origin:0 0;">First</div>
<div id="t_prev" class="a" style="left:1119.10px;top:779.59px;font-size:12.60px;line-height:12.60px;color:#aaa;font-weight:bold;transform:scaleX(0.8861);transform-origin:0 0;">Previous</div>
<div id="t_page" class="a" style="left:1168.80px;top:779.59px;font-size:12.60px;line-height:12.60px;color:#333;transform:scaleX(0.8263);transform-origin:0 0;">Page</div>
<div class="a" style="left:1196px;top:769px;width:60px;height:30px;background:#fff;border:1px solid #d8d8d8"></div>
<div id="t_pg1" class="a" style="left:1206.50px;top:779.59px;font-size:12.60px;line-height:12.60px;color:#222;">1</div>
<div id="t_of28" class="a" style="left:1258.50px;top:779.59px;font-size:12.60px;line-height:12.60px;color:#333;transform:scaleX(0.8575);transform-origin:0 0;">of 28</div>
<div class="a" style="left:1285px;top:771px;width:73px;height:29px;background:#dcebf8"></div>
<div id="t_next" class="a" style="left:1291.00px;top:779.59px;font-size:12.60px;line-height:12.60px;color:#333;font-weight:bold;transform:scaleX(0.8885);transform-origin:0 0;">Next</div>
<div id="t_last" class="a" style="left:1327.90px;top:779.59px;font-size:12.60px;line-height:12.60px;color:#333;font-weight:bold;transform:scaleX(0.8445);transform-origin:0 0;">Last</div>
<div id="t_footer" class="a" style="left:1006.60px;top:863.01px;font-size:11.40px;line-height:11.40px;color:#222;transform:scaleX(0.9586);transform-origin:0 0;"><b>PT. Wasa Kharisma Indonesia &copy; 2024</b> -Jumat, 23 Februari 2024 13:30</div>
<div class="a" style="left:0;top:55px;width:1381px;height:1px;background:rgba(0,50,100,.42)"></div>
<div class="a" style="left:222px;top:56px;width:1159px;height:3px;background:linear-gradient(180deg,rgba(210,230,245,.6),rgba(244,245,245,0))"></div>
<div class="a" style="left:221px;top:56px;width:10px;height:838px;background:linear-gradient(90deg,rgba(0,0,0,.055),rgba(0,0,0,0))"></div>
</body></html>
